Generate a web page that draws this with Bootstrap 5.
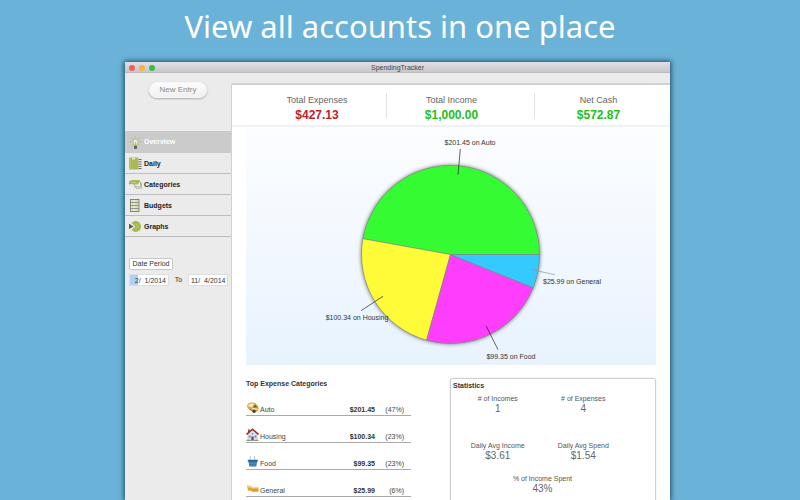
<!DOCTYPE html>
<html lang="en">
<head>
<meta charset="utf-8">
<meta name="viewport" content="width=device-width, initial-scale=1">
<title>SpendingTracker</title>
<link href="https://cdn.jsdelivr.net/npm/bootstrap@5.3.0/dist/css/bootstrap.min.css" rel="stylesheet">
<style>
  body { background: #6bb2d8; font-family: "Liberation Sans", Arial, sans-serif; font-size: 7px; line-height: 8px; color: #333; }
  .headline { font-family: "Noto Sans", "Open Sans", sans-serif; font-size: 31px; line-height: 52px; height: 62px; font-weight: 400; color: #fff; }
  .stage { padding: 0 130px 0 125px; min-height: 0; }
  .app-window { background: #ebebeb; box-shadow: 0 0 5px 1px #1d4a63; }
  .titlebar { height: 11px; line-height: 11px; background: linear-gradient(#e2e0e4, #c9c7cb); border-bottom: 1px solid #bbb; color: #444; }
  .lights { left: 4px; top: 3px; gap: 4px; }
  .lights i { width: 6px; height: 6px; border-radius: 50%; }
  .window-body { min-height: 0; overflow: hidden; }
  .side { width: 106px; padding-top: 9px; }
  .new-entry { width: 58px; height: 16px; margin: 0 0 33px 24px; font-size: 8px; line-height: 14px; color: #8a8a8a; background: linear-gradient(#fcfcfc, #f0f0f0); border: 1px solid #f6f6f6; box-shadow: 0 1px 2px #aaa; }
  .menu a { height: 21px; gap: 2px; padding: 1px 0 0 4px; border-bottom: 1px solid #bdbdbd; color: #1c1c1c; font-weight: 700; text-decoration: none; }
  .menu a.current { height: 22px; background: #cbcbcb; border-color: #cbcbcb; color: #fff; }
  .menu svg { width: 13px; height: 15px; }
  .period { padding: 21px 3px 0 4px; }
  .period button { width: 44px; height: 12px; font-size: 7px; line-height: 10px; color: #333; background: #fff; border: 1px solid #c8c8c8; border-radius: 2px; }
  .dates { margin-top: 4px; }
  .dates input { width: 40px; height: 12px; padding: 0 2px; border: 1px solid #dedede; border-radius: 0; font-size: 7px; line-height: 10px; color: #333; background: #fff; text-align: right; }
  .dates .from { background: linear-gradient(90deg, #acd0f6 8px, #fff 8px); }
  .sheet { margin-top: 10px; background: #fff; border: 1px solid #d2d2d2; border-width: 2px 0 0 1px; border-radius: 2px 0 0 0; min-width: 0; }
  .totals { display: grid; grid-template-columns: 138fr 148fr 128fr; padding: 8px 8px 7px 16px; border-bottom: 2px solid #f1f2f4; font-size: 9px; line-height: 14px; color: #666; text-align: center; }
  .totals > div { height: 25px; }
  .totals > div + div { border-left: 1px solid #e2e2e2; }
  .totals .income { padding-right: 18px; }
  .totals strong { display: block; margin-top: 1px; font-size: 12px; line-height: 15px; color: #22c022; }
  .totals .spent { color: #c32128; }
  .chart { margin: 0 14px; background: linear-gradient(#fcfdff, #e8f3fe); }
  .chart svg { width: 100%; font-size: 7px; }
  .details { margin: 13px 14px 0; gap: 39px; }
  .top-list { width: 165px; padding-top: 2px; }
  .top-list table { width: 100%; color: #444; }
  .top-list caption { caption-side: top; padding: 0; color: #333; font-weight: 700; font-size: 7px; line-height: 8px; }
  .top-list tr { height: 27px; border-bottom: 1px solid #aaa; }
  .top-list td { vertical-align: bottom; padding: 0 0 1px; }
  .top-list td:first-child { padding-bottom: 0; }
  .top-list .amount { text-align: right; font-weight: 700; color: #333; }
  .top-list .share { width: 36px; padding-right: 7px; text-align: right; }
  .top-list svg { width: 13px; height: 13px; margin: 0 1px 1px 0; }
  .top-list .name { padding-bottom: 1px; }
  .stats { border: 1px solid #cfcfcf; border-radius: 2px 2px 0 0; height: 150px; padding: 2px 29px 0 2px; box-shadow: 0 0 2px #ddd; }
  .stats h2 { font-size: 7px; line-height: 9px; font-weight: 700; margin: 0; }
  .figures { display: grid; grid-template-columns: 1fr 1fr; text-align: center; color: #555; margin: 5px 0 0 2px; }
  .figures > div { height: 47px; }
  .figures .tall-less { height: 33px; }
  .figures .wide { grid-column: 1 / 3; padding-left: 4px; }
  .figures b { display: block; margin-top: 1px; font-weight: 400; font-size: 10px; line-height: 10px; color: #666; }
</style>
</head>
<body class="vh-100 overflow-hidden d-flex flex-column">
<h1 class="headline text-center m-0 flex-shrink-0">View all accounts in one place</h1>
<div class="stage flex-grow-1 d-flex">
  <div class="app-window flex-grow-1 d-flex flex-column">
    <header class="titlebar position-relative text-center flex-shrink-0">
      <span class="lights position-absolute d-flex"><i style="background:#ee5f5b"></i><i style="background:#f5b53c"></i><i style="background:#2fc146"></i></span>
      SpendingTracker
    </header>
    <div class="window-body d-flex flex-grow-1">
      <aside class="side flex-shrink-0">
        <button type="button" class="new-entry btn rounded-pill p-0 d-block">New Entry</button>
        <nav class="menu d-flex flex-column">
          <a href="#overview" class="current d-flex align-items-center" aria-current="page">
            <svg viewBox="0 0 13 15"><g stroke="#c4b95c" stroke-width=".9"><path d="M6.500.5v2M2.300 2.300l1.500 1.500M10.700 2.300L9.200 3.800M.3 6.500h2.300M10.400 6.500h2.300M2.300 10.500l1.500-1.300M10.700 10.500l-1.500-1.300"/></g><path d="M5.300 10.200c0-1.500-1.300-2-1.300-3.800a2.500 2.500 0 0 1 5 0c0 1.800-1.300 2.300-1.300 3.800z" fill="#eceed2" stroke="#a5ad69" stroke-width=".7"/><path d="M6.500 10V7" stroke="#a5ad69" stroke-width=".7"/><path d="M5 10.700h3v2.300l-.7 1H5.700l-.7-1z" fill="#606060"/></svg>Overview</a>
          <a href="#daily" class="d-flex align-items-center">
            <svg viewBox="0 0 13 15"><path d="M8 2.500h4v10H8z" fill="#eee"/><path d="M9.500 3.500h3M9.500 5.800h3M9.500 8.100h3M9.500 10.400h3M9.500 12.500h3" stroke="#555" stroke-width=".9"/><rect x="0" y="1.500" width="9.500" height="12" rx="1" fill="#aeb757"/><path d="M1.200 2v11" stroke="#c7ce82" stroke-width=".6"/><rect x="3" y="2" width="3" height="1.500" fill="#e6ebbc"/></svg>Daily</a>
          <a href="#categories" class="d-flex align-items-center">
            <svg viewBox="0 0 13 15"><path d="M5 6l2 5.200h5.500V6.500L10 5z" fill="#f3f3ef" stroke="#8b9275" stroke-width=".6"/><path d="M4.500 5l1.500 4.700h5.500V5L9.500 3.500z" fill="#eef0df" stroke="#8b9275" stroke-width=".6"/><path d="M0 4.200L3 3h6.500l1.500 1.200-2 3.300H4.500L3 7 0 7.500z" fill="#a6b65b"/><path d="M2.500 5.500h4l1 1" fill="none" stroke="#dbe2ad" stroke-width=".6"/></svg>Categories</a>
          <a href="#budgets" class="d-flex align-items-center">
            <svg viewBox="0 0 13 15"><rect x="1.500" y="1.500" width="8.500" height="12" fill="#eef0df" stroke="#6a6f62" stroke-width=".8"/><path d="M1.500 4.500H10M1.500 7.500H10M1.500 10.500H10" stroke="#6a6f62" stroke-width=".7"/><path d="M2.800 3h1.700M6 3h3M2.800 6h1.700M6 6h3M2.800 9h1.700M6 9h3M2.800 12h1.700M6 12h3" stroke="#bcc584" stroke-width=".9"/></svg>Budgets</a>
          <a href="#graphs" class="d-flex align-items-center">
            <svg viewBox="0 0 13 15"><path d="M6.300 7.500L2.500 4a5.400 5.400 0 1 1 0 7z" fill="#aab74f"/><path d="M7 5.500l2 2-2 1.500" fill="none" stroke="#c9d189" stroke-width=".8"/><path d="M0 4.800l4.600 2.600L0 10z" fill="#575757"/></svg>Graphs</a>
        </nav>
        <div class="period">
          <button type="button" class="btn p-0 d-block">Date Period</button>
          <div class="dates d-flex justify-content-between align-items-center">
            <input class="from" type="text" value="2/  1/2014" aria-label="Start date">
            <span>To</span>
            <input type="text" value="11/  4/2014" aria-label="End date">
          </div>
        </div>
      </aside>
      <main class="sheet flex-grow-1">
        <section class="totals">
          <div>Total Expenses<strong class="spent">$427.13</strong></div>
          <div class="income">Total Income<strong>$1,000.00</strong></div>
          <div>Net Cash<strong>$572.87</strong></div>
        </section>
        <section class="chart">
          <svg class="d-block" viewBox="0 0 410 238" role="img" aria-label="Spending by category">
            <circle cx="204.500" cy="127.500" r="89" fill="#888" style="filter:drop-shadow(0 0 2px #555)"/>
            <g stroke="#7d8a80" stroke-width=".6">
              <path d="M204.500 127.500H293.500A89 89 0 0 0 116.900 111.700z" fill="#35fb32"/>
              <path d="M204.500 127.500L116.900 111.700A89 89 0 0 0 180.600 213.200z" fill="#fffb38"/>
              <path d="M204.500 127.500L180.600 213.200A89 89 0 0 0 287.100 160.700z" fill="#ff3dfc"/>
              <path d="M204.500 127.500L287.100 160.700A89 89 0 0 0 293.500 127.500z" fill="#35caff"/>
            </g>
            <g stroke="#222" stroke-width=".7">
              <path d="M214.300 22L212 47.700M115 183.700L137 169.300M240 198.700L252 222.700"/>
              <path d="M284 142.300L309 147.700" stroke="#8a98a0"/>
            </g>
            <g fill="#333" text-anchor="middle">
              <text x="224" y="18">$201.45 on Auto</text>
              <text x="111" y="193">$100.34 on Housing</text>
              <text x="265" y="232">$99.35 on Food</text>
              <text x="326" y="157">$25.99 on General</text>
            </g>
          </svg>
        </section>
        <div class="details d-flex">
          <section class="top-list flex-shrink-0">
            <table>
              <caption>Top Expense Categories</caption>
              <tbody>
              <tr><td><div class="d-flex align-items-end"><svg viewBox="0 0 13 13"><path d="M1 5.500C1 3 3 1.500 6 1.500s5 1.500 6.500 4.500v3.500L9.500 11.500 2.500 8z" fill="#d9a545"/><path d="M2 5C3 2.500 6 2 8 3L6 6.500z" fill="#fae9bd"/><path d="M7 6.500l2-3 2.500 3z" fill="#7a5f38"/><path d="M2.500 8l3 .5 1 2z" fill="#8e662a"/><circle cx="8" cy="10.300" r="1.600" fill="#4a3822"/><path d="M6 7.300l5.500 1" stroke="#fff0bd"/></svg><span class="name">Auto</span></div></td><td class="amount">$201.45</td><td class="share">(47%)</td></tr>
              <tr><td><div class="d-flex align-items-end"><svg viewBox="0 0 13 13"><path d="M2 5.500L6.500 2 11 5.500v7H2z" fill="#dfe5f2" stroke="#8a96b0" stroke-width=".5"/><path d="M2 1.500h1.800v3H2z" fill="#8e4a46"/><path d="M.5 6.500L6.500 1.200l6 5.300" fill="none" stroke="#a82c30" stroke-width="1.600"/><rect x="5.300" y="8.500" width="2.400" height="4" fill="#7e4c42"/><path d="M3 7.500h1.600v2H3zM8.500 7.500h1.600v2H8.500zM5.800 5h1.500v1.600H5.800z" fill="#5d88bb"/><path d="M.5 12.300h4M8.500 12.300h4" stroke="#718a6c"/></svg><span class="name">Housing</span></div></td><td class="amount">$100.34</td><td class="share">(23%)</td></tr>
              <tr><td><div class="d-flex align-items-end"><svg viewBox="0 0 13 13"><path d="M4 5l.7-4M9 5l-.7-4" stroke="#8ba5b8" stroke-width=".7"/><path d="M2.300 5.500h9l-1 6H3.300z" fill="#377bb0"/><path d="M1.800 4.800h10v1.700h-10z" fill="#28608e"/><path d="M3 8.500h7.500M5.300 7v4M8.300 7v4" stroke="#5d98c4" stroke-width=".5"/></svg><span class="name">Food</span></div></td><td class="amount">$99.35</td><td class="share">(23%)</td></tr>
              <tr><td><div class="d-flex align-items-end"><svg viewBox="0 0 13 13"><path d="M1 3.500l4.500.5 1.500 5-5-.5z" fill="#e0a236"/><path d="M1 3.500l4.500.5.7 1.800-4.700-.5z" fill="#f6d476"/><path d="M5 5h7.500v4.800H6z" fill="#dc9c2e"/><path d="M5 5h7.500v1.500H5.300z" fill="#f8d97b"/></svg><span class="name">General</span></div></td><td class="amount">$25.99</td><td class="share">(6%)</td></tr>
              </tbody>
            </table>
          </section>
          <section class="stats flex-grow-1">
            <h2>Statistics</h2>
            <div class="figures">
              <div># of Incomes<b>1</b></div>
              <div># of Expenses<b>4</b></div>
              <div class="tall-less">Daily Avg Income<b>$3.61</b></div>
              <div class="tall-less">Daily Avg Spend<b>$1.54</b></div>
              <div class="wide">% of Income Spent<b>43%</b></div>
            </div>
          </section>
        </div>
      </main>
    </div>
  </div>
</div>
<script src="https://cdn.jsdelivr.net/npm/bootstrap@5.3.0/dist/js/bootstrap.bundle.min.js"></script>
</body>
</html>
